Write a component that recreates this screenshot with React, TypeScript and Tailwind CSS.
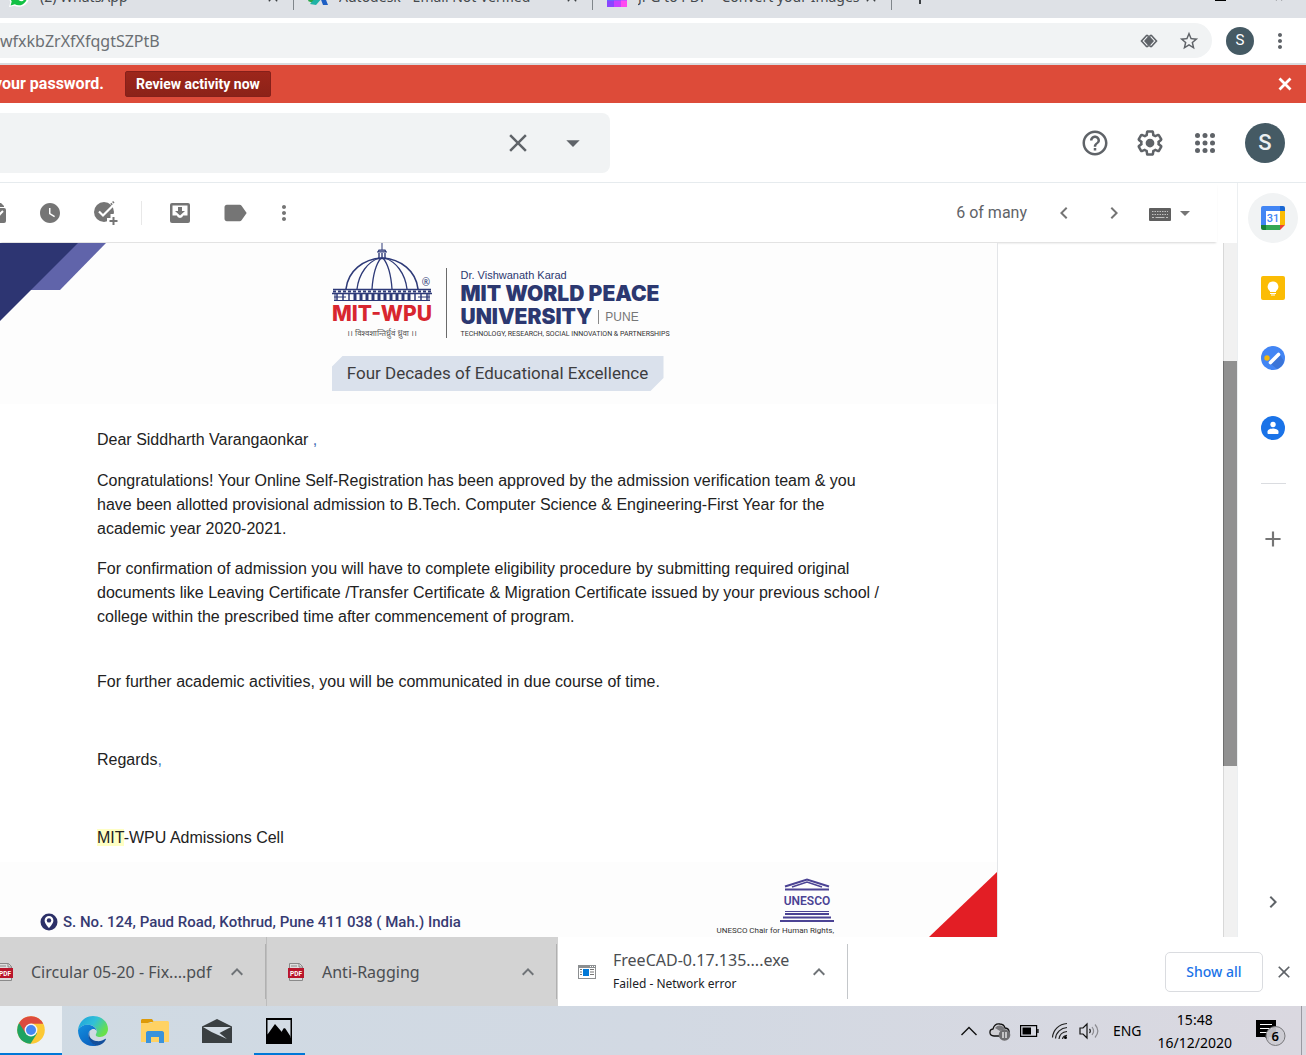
import type { ReactNode } from "react";
import {
  MdWatchLater,
  MdLabel,
  MdMoreVert,
  MdArrowDropDown,
  MdChevronLeft,
  MdChevronRight,
  MdClose,
  MdHelpOutline,
  MdStarBorder,
  MdAdd,
  MdKeyboardArrowUp,
} from "react-icons/md";

/* ---------- icons ---------- */

function WhatsAppIcon() {
  return (
    <svg viewBox="0 0 20 20" className="h-5 w-5 shrink-0">
      <path d="M0 20l1.4-5A10 10 0 1 1 5.3 18.700z" fill="#fff" />
      <path d="M1.600 18.400l1.100-4A8.300 8.300 0 1 1 5.800 17.300z" fill="#12c144" />
      <path d="M7 5.500c-2 1-1.400 4 1 6.300s5.300 3.400 6.600 1.400c.4-.8-2.100-2.400-2.700-1.700-.7.800-1 .7-2.300-.4C8.400 9.900 8.300 9.600 8.900 9c.6-.6-.9-3.800-1.900-3.500z" fill="#fff" />
    </svg>
  );
}

function AutodeskIcon() {
  return (
    <svg viewBox="0 0 20 20" className="h-5 w-5 shrink-0">
      <path d="M0 14L7 0h6L7 17z" fill="#2aa84a" />
      <path d="M2 17L11 7l4 3-7 8z" fill="#1fb2a6" />
      <path d="M8 0h5l7 18h-5l-3-8z" fill="#1d5fc4" />
    </svg>
  );
}

function PixelIcon() {
  return (
    <svg viewBox="0 0 20 20" className="h-5 w-5 shrink-0">
      <path d="M0 0h7v7H0z" fill="#35c6ff" />
      <path d="M7 0h7v7H7z" fill="#6a8cff" />
      <path d="M14 0h6v7h-6z" fill="#b06cff" />
      <path d="M0 7h7v7H0z" fill="#6a63ff" />
      <path d="M7 7h7v7H7z" fill="#9a55ff" />
      <path d="M14 7h6v7h-6z" fill="#d04cff" />
      <path d="M0 14h7v6H0z" fill="#8a45ff" />
      <path d="M7 14h7v6H7z" fill="#c840ff" />
      <path d="M14 14h6v6h-6z" fill="#ff4af0" />
    </svg>
  );
}

function SettingsIcon() {
  return (
    <svg viewBox="0 0 24 24" className="h-[30px] w-[30px]" fill="currentColor">
      <path d="M13.85 22.25h-3.7c-.74 0-1.36-.54-1.45-1.27l-.27-1.89c-.27-.14-.53-.29-.79-.46l-1.8.72c-.7.26-1.47-.03-1.81-.65L2.2 15.53c-.35-.66-.2-1.44.36-1.88l1.53-1.19c-.01-.15-.02-.3-.02-.46 0-.15.01-.31.02-.46l-1.52-1.19c-.59-.45-.74-1.26-.37-1.88l1.85-3.19c.34-.62 1.11-.9 1.79-.63l1.81.73c.26-.17.52-.32.78-.46l.27-1.91c.09-.7.71-1.25 1.44-1.25h3.7c.74 0 1.36.54 1.45 1.27l.27 1.89c.27.14.53.29.79.46l1.8-.72c.71-.26 1.48.03 1.82.65l1.84 3.18c.36.66.2 1.44-.36 1.88l-1.52 1.19c.01.15.02.3.02.46s-.01.31-.02.46l1.52 1.19c.56.45.72 1.23.37 1.86l-1.86 3.22c-.34.62-1.11.9-1.8.63l-1.8-.72c-.26.17-.52.32-.78.46l-.27 1.91c-.1.68-.72 1.22-1.46 1.22zm-3.23-2h2.76l.37-2.55.53-.22c.44-.18.88-.44 1.34-.78l.45-.34 2.38.96 1.38-2.4-2.03-1.58.07-.56c.03-.26.06-.51.06-.78s-.03-.53-.06-.78l-.07-.56 2.03-1.58-1.39-2.4-2.39.96-.45-.35c-.42-.32-.87-.58-1.33-.77l-.52-.22-.37-2.55h-2.76l-.37 2.55-.53.21c-.44.19-.88.44-1.34.79l-.45.33-2.38-.95-1.39 2.39 2.03 1.58-.07.56a7 7 0 0 0-.06.79c0 .26.02.53.06.78l.07.56-2.03 1.58 1.38 2.4 2.39-.96.45.35c.43.33.86.58 1.33.77l.53.22.38 2.55z" />
      <circle cx="12" cy="12" r="3.5" />
    </svg>
  );
}

function AppsIcon() {
  return (
    <svg viewBox="0 0 24 24" className="h-[30px] w-[30px]" fill="currentColor">
      {[6, 12, 18].map((y) =>
        [6, 12, 18].map((x) => <circle key={`${x}-${y}`} cx={x} cy={y} r="2" />),
      )}
    </svg>
  );
}

function DiamondIcon() {
  return (
    <svg viewBox="0 0 18 16" className="h-4 w-[18px]">
      <path d="M9 2.500L14 8 9 13.500 4 8z" fill="#5f6368" />
      <path d="M7 2L1.500 8 7 14M11 2l5.500 6L11 14" fill="none" stroke="#5f6368" strokeWidth="1.600" />
      <path d="M7 2l1.500 1.500M11 2L9.500 3.500M7 14l1.500-1.500M11 14l-1.500-1.500" stroke="#5f6368" strokeWidth="1.600" />
    </svg>
  );
}

function UnreadIcon() {
  return (
    <svg viewBox="0 0 24 24" className="h-6 w-6 shrink-0" fill="#757575">
      <path d="M2 7h20a2 2 0 0 1 2 2v11a2 2 0 0 1-2 2H2z" />
      <path d="M12 2h7l3 3v1H12z" />
      <path d="M12 19l9-9" stroke="#fff" strokeWidth="2" />
    </svg>
  );
}

function AddTaskIcon() {
  return (
    <svg viewBox="0 0 26 26" className="h-[26px] w-[26px]">
      <circle cx="12" cy="12" r="10" fill="#757575" />
      <path d="M7 11.500l4 4L22 4.500" fill="none" stroke="#fff" strokeWidth="2.200" />
      <path d="M19 4.500l3-3" stroke="#757575" strokeWidth="2" strokeDasharray="1.500 1" />
      <path d="M21 14v12M15 20.500h11" stroke="#fff" strokeWidth="5" />
      <path d="M21.500 17v8M17.500 21h8" stroke="#757575" strokeWidth="2" />
    </svg>
  );
}

function MoveToInboxIcon() {
  return (
    <svg viewBox="0 0 22 22" className="h-[22px] w-[22px]">
      <rect x="1" y="1" width="20" height="20" rx="2" fill="#757575" />
      <path d="M3.500 3.500h15v10h-4.300a3.300 3.300 0 0 1-6.400 0H3.500z" fill="#fff" />
      <path d="M9 5h4v4h3l-5 4.500L6 9h3z" fill="#757575" />
    </svg>
  );
}

function InputToolsIcon() {
  return (
    <svg viewBox="0 0 22 13" className="mt-1 h-[13px] w-[22px]">
      <rect width="22" height="13" rx="1" fill="#5f5f5f" />
      <path d="M3 3.500h16M3 6.500h16" stroke="#fff" strokeWidth="1.200" strokeDasharray="1.500 1" opacity=".6" />
      <path d="M3 9.500h2M6.500 9.500h9M17 9.500h2" stroke="#fff" strokeWidth="1" opacity=".6" />
    </svg>
  );
}

function CalendarIcon() {
  return (
    <svg viewBox="0 0 24 24" className="h-6 w-6">
      <path d="M2 0h18v5H5v15H0V2a2 2 0 0 1 2-2z" fill="#4285f4" />
      <path d="M19 0h3a2 2 0 0 1 2 2v3h-5z" fill="#1967d2" />
      <path d="M19 5h5v14h-5z" fill="#fbbc04" />
      <path d="M5 19h14v5H5z" fill="#34a853" />
      <path d="M0 19h5v5H2a2 2 0 0 1-2-2z" fill="#188038" />
      <path d="M19 24v-5h5z" fill="#ea4335" />
      <path d="M5 5h14v14H5z" fill="#fff" />
      <text x="12" y="16" textAnchor="middle" fontSize="11" fontWeight="500" fontFamily="Roboto, sans-serif" fill="#4285f4">
        31
      </text>
    </svg>
  );
}

function KeepIcon() {
  return (
    <svg viewBox="0 0 24 24" className="h-6 w-6">
      <rect width="24" height="24" rx="2" fill="#fbbc04" />
      <path d="M12 5.500a5.300 5.300 0 0 0-3 9.700V16h6v-.8a5.300 5.300 0 0 0-3-9.700zM9 17h6v1H9zM10 18.500h4v1h-4z" fill="#fff" />
    </svg>
  );
}

function TasksIcon() {
  return (
    <svg viewBox="0 0 24 24" className="h-6 w-6">
      <circle cx="12" cy="12" r="12" fill="#4285f4" />
      <path d="M10 18l9-9 4 6a12 12 0 0 1-7 8z" fill="#3a74d8" />
      <circle cx="6" cy="12" r="2.700" fill="#f4b70c" />
      <path d="M9.500 16.500l8-8" stroke="#fff" strokeWidth="3.600" strokeLinecap="round" />
    </svg>
  );
}

function ContactsIcon() {
  return (
    <svg viewBox="0 0 24 24" className="h-6 w-6">
      <circle cx="12" cy="12" r="12" fill="#1a73e8" />
      <circle cx="12" cy="8.500" r="2.700" fill="#fff" />
      <path d="M6.500 17v-1.500c0-2 3.500-3 5.500-3s5.500 1 5.500 3V17c0 .6-.5 1-1 1h-9c-.6 0-1-.4-1-1z" fill="#fff" />
    </svg>
  );
}

function PdfIcon({ className = "" }: { className?: string }) {
  return (
    <svg viewBox="0 0 16 18" className={`h-[18px] w-4 shrink-0 ${className}`}>
      <path d="M1.500.5h10l3 3v14h-13z" fill="#ddd" stroke="#8a8a8a" />
      <path d="M11 .5V4h3.500M3 3h6" fill="none" stroke="#8a8a8a" />
      <path d="M0 5h16v10H0z" fill="#b9152b" />
      <text x="8" y="12.500" textAnchor="middle" fontSize="6.500" fontWeight="700" fontFamily="Roboto, sans-serif" fill="#fff">
        PDF
      </text>
    </svg>
  );
}

function ExeIcon() {
  return (
    <svg viewBox="0 0 18 14" className="h-[14px] w-[18px] shrink-0">
      <rect x=".5" y=".5" width="17" height="13" fill="#fff" stroke="#8c8f91" />
      <path d="M0 0h18v3H0z" fill="#8c8f91" />
      <path d="M12 1.500h1M14 1.500h1M16 1.500h1" stroke="#fff" />
      <path d="M5 4h6v7H5z" fill="#0078d7" />
      <path d="M2 4.500h2M2 7h2M2 9.500h2M12 4.500h4M12 7h4M12 9.500h4" stroke="#777" />
    </svg>
  );
}

function DomeLogo() {
  const columns = Array.from({ length: 16 }, (_, i) => 5 + i * 6);
  return (
    <svg viewBox="0 0 100 58" className="h-[58px] w-[100px]" fill="none" stroke="#2e3a78">
      <path d="M50 0v8" strokeWidth="1" />
      <path d="M47 7h6l1 2h-8zM45 9h10" strokeWidth="1.200" fill="#8a90b5" />
      <path d="M47 10v5M50 10v5M53 10v5M45.500 15.500h9" strokeWidth="1.400" />
      <path d="M14 46C16 28 31 16 50 15c19 1 34 13 36 31" strokeWidth="1.600" />
      <path d="M25 46C27 30 36 19 47 15M40 46c1-14 4-25 9-31M60 46c-1-14-4-25-9-31M75 46C73 30 64 19 53 15" strokeWidth="1.300" />
      <path d="M1 46.500h98M0 50.500h100" strokeWidth="1.500" />
      <path d="M1 48.500h98" strokeWidth="2" strokeDasharray="3 2" />
      <path d="M2 57.500h96" strokeWidth="1" />
      {columns.map((x) => (
        <path key={x} d={`M${x} 51v6`} strokeWidth={x > 20 && x < 80 ? 3 : 1.5} />
      ))}
      <path d="M3 51v6M97 51v6M2 54h12M86 54h12" strokeWidth="1" />
    </svg>
  );
}

function UnescoLogo() {
  return (
    <svg viewBox="0 0 54 44" className="h-11 w-[54px] shrink-0" fill="none" stroke="#4b4394">
      <path d="M5 8.500L27 1.500l22 7" strokeWidth="2" />
      <path d="M12 9l15-5 15 5" strokeWidth="1.500" />
      <path d="M5 11.500h44M5 36h44M3 39.500h48M0 43h54" strokeWidth="1.800" />
      <path d="M5 33.500h44" strokeWidth="1" />
      <text x="27" y="27" textAnchor="middle" fontSize="12" fontWeight="600" fontFamily="Roboto, sans-serif" fill="#4b4394" stroke="none">
        UNESCO
      </text>
    </svg>
  );
}

function PinIcon() {
  return (
    <svg viewBox="0 0 18 18" className="h-[18px] w-[18px] shrink-0">
      <circle cx="9" cy="9" r="8.500" fill="#2c3068" />
      <path d="M9 3a4.400 4.400 0 0 0-4.400 4.400C4.600 10.500 9 15 9 15s4.400-4.500 4.400-7.600A4.400 4.400 0 0 0 9 3z" fill="#fff" />
      <circle cx="9" cy="7.400" r="2.200" fill="#2c3068" />
    </svg>
  );
}

function ChromeIcon() {
  return (
    <svg viewBox="0 0 28 28" className="h-7 w-7">
      <circle cx="14" cy="14" r="13.800" fill="#fcc934" />
      <path d="M14 14L2 7.100A13.800 13.800 0 0 0 13.500 27.800L20 17.500z" fill="#1ea362" />
      <path d="M2 7.100l6.500 10 5.500-9.400h12.200A13.800 13.800 0 0 0 2 7.100z" fill="#dd4b3e" />
      <circle cx="14" cy="14" r="6.400" fill="#f4f6f8" />
      <circle cx="14" cy="14" r="5" fill="#4688f1" />
    </svg>
  );
}

function EdgeIcon() {
  return (
    <svg viewBox="0 0 30 30" className="h-[30px] w-[30px]">
      <defs>
        <linearGradient id="edge-top" x1="0" y1="0" x2="1" y2="0.500">
          <stop offset="0" stopColor="#1c9fdc" />
          <stop offset="0.550" stopColor="#31c0d8" />
          <stop offset="1" stopColor="#68e04a" />
        </linearGradient>
        <linearGradient id="edge-left" x1="0" y1="0" x2="0.600" y2="1">
          <stop offset="0" stopColor="#1490df" />
          <stop offset="1" stopColor="#0a62c0" />
        </linearGradient>
      </defs>
      <path d="M0 14C1 6 7 0 15 0c9 0 15 6 15 13 0 5-4 8-8 8-3 0-5-1-4-3 2-3 0-8-6-9C7 8 2 10 0 14z" fill="url(#edge-top)" />
      <path d="M0 14c2-4 7-6 12-5 4 1 6.500 3.500 6.500 6-1-2-3-2.500-5-1.500C8 16 10 26 19 29.500c-1 .4-2.500.5-4 .5C6 30 0 23 0 14z" fill="url(#edge-left)" />
      <path d="M12 15c-2 4 0 9 6 10 4 .6 7-.5 9-2 .6-.4 1.200.2.800.8C26 27 23 29 19 29.700 12 28 8 20 12 15z" fill="#134f9c" />
    </svg>
  );
}

function FolderIcon() {
  return (
    <svg viewBox="0 0 28 24" className="h-6 w-7">
      <path d="M0 1.500C0 .7.700 0 1.500 0H11l2 3h-3L0 6z" fill="#dd9a08" />
      <path d="M0 4h10l3-2h13.500c.8 0 1.500.7 1.500 1.500V23H0z" fill="#ffd264" />
      <path d="M5 24V14c0-1 .7-2 2-2h14c1.300 0 2 1 2 2v10h-5v-6h-8v6z" fill="#3a93dc" />
    </svg>
  );
}

function MailIcon() {
  return (
    <svg viewBox="0 0 30 24" className="h-6 w-[30px]">
      <path d="M0 7.500L15 0l15 7.500V24H0z" fill="#3a3f41" />
      <path d="M1 8h28L17.500 14l7.500 6L9.500 13z" fill="#d3dce4" />
    </svg>
  );
}

function PhotosIcon() {
  return (
    <svg viewBox="0 0 26 26" className="h-[26px] w-[26px]">
      <path d="M0 0h26v26H0z" />
      <path d="M1.500 2h23v18L19.500 12.500l-2 .3-1 2L9 6 1.500 16.500z" fill="#d3dce4" />
      <path d="M15.500 14l2-3.500c1-.6 2 0 2.500 1l4.500 7V24L20 18.500z" />
    </svg>
  );
}

function CloudIcon() {
  return (
    <svg viewBox="0 0 22 20" className="h-5 w-[22px]">
      <path d="M5 15C-.5 14.500 0 8.500 4 8c1-4 4-5.500 7-5 3 .3 4.500 2 5 4 4 0 5 4 3.500 6.500L12 15z" fill="#cfcfd4" stroke="#111" strokeWidth="1.300" />
      <path d="M6 7c3-4 8-3 10 1l-5 2z" fill="#77777b" />
      <circle cx="15.500" cy="14" r="5.800" fill="#6e6e70" />
      <path d="M14 11v6M17 11v6" stroke="#fff" strokeWidth="1.200" />
    </svg>
  );
}

function BatteryIcon() {
  return (
    <svg viewBox="0 0 19 12" className="h-3 w-[19px]">
      <path d="M.6.600h16v10.800H.600zM18 4v4" fill="none" stroke="#000" strokeWidth="1.200" />
      <path d="M2.500 2.500h8.500v7H2.500z" />
    </svg>
  );
}

function WifiIcon() {
  return (
    <svg viewBox="0 0 18 18" className="h-[18px] w-[18px]" fill="none" stroke="#222" strokeWidth="1.200">
      <path d="M1.500 15.500C2 8 8 2 16 1.500M4.500 16.500C5 10.500 10 6 16 5.500M8 17c.5-4.500 3.500-7 8-7.500M11.500 17c.3-2 2-3.500 4.500-3.700" />
      <circle cx="14.500" cy="15.500" r="1.500" fill="#000" stroke="none" />
    </svg>
  );
}

function SpeakerIcon() {
  return (
    <svg viewBox="0 0 20 18" className="h-[18px] w-5" fill="none" strokeWidth="1.200">
      <path d="M1 6h3l4-4v14l-4-4H1z" stroke="#111" />
      <path d="M10.500 7c1 1 1 3 0 4" stroke="#111" />
      <path d="M13 5c2 2.500 2 5.500 0 8" stroke="#8b8b90" />
      <path d="M16 2.500c3.500 4 3.500 9 0 13" stroke="#8b8b90" />
    </svg>
  );
}

/* ---------- building blocks ---------- */

function IconButton({ label, className, children }: { label: string; className: string; children: ReactNode }) {
  return (
    <button type="button" aria-label={label} className={`flex shrink-0 items-center justify-center ${className}`}>
      {children}
    </button>
  );
}

function BrowserTab({ icon, title, className }: { icon: ReactNode; title: string; className: string }) {
  return (
    <div className={`flex items-center ${className}`}>
      {icon}
      <span className="ml-[11px] flex-1 overflow-hidden text-sm whitespace-nowrap text-[#45494d]">{title}</span>
      <IconButton label={`Close ${title}`} className="mr-[10px] w-5">
        <MdClose className="h-4 w-4 text-[#3c4043]" />
      </IconButton>
      <span className="h-[26px] w-px bg-[#80868b]" />
    </div>
  );
}

function TaskbarApp({ label, className = "", children }: { label: string; className?: string; children: ReactNode }) {
  return (
    <button type="button" aria-label={label} className={`relative flex w-[62px] items-center justify-center ${className}`}>
      {children}
    </button>
  );
}

/* ---------- page sections ---------- */

function BrowserChrome() {
  return (
    <header className="shrink-0">
      <div className="flex h-[18px] flex-col justify-end overflow-hidden bg-[#dee1e6]">
        <div className="flex h-[42px] shrink-0 items-center">
          <BrowserTab className="w-[294px] pl-[9px]" icon={<WhatsAppIcon />} title="(2) WhatsApp" />
          <BrowserTab className="w-[299px] pl-[14px]" icon={<AutodeskIcon />} title="Autodesk - Email Not Verified" />
          <BrowserTab className="w-[299px] pl-[14px]" icon={<PixelIcon />} title="JPG to PDF – Convert your Images" />
          <IconButton label="New tab" className="ml-4 w-6">
            <MdAdd className="h-6 w-6 text-[#3c4043]" />
          </IconButton>
          <div className="ml-auto flex items-center gap-[47px] pr-[21px]">
            <span className="mt-[7px] h-px w-[11px] bg-black" />
            <MdClose className="h-3 w-3" />
          </div>
        </div>
      </div>
      <div className="flex h-[45px] items-center bg-white pr-[14px]">
        <div className="flex h-[35px] flex-1 items-center rounded-r-full bg-[#f1f3f4] pr-[11px]">
          <input
            aria-label="Address"
            defaultValue="wfxkbZrXfXfqgtSZPtB"
            className="flex-1 bg-transparent text-base text-[#6b6f73] outline-none"
          />
          <IconButton label="Page info" className="w-10">
            <DiamondIcon />
          </IconButton>
          <IconButton label="Bookmark" className="ml-2 w-6">
            <MdStarBorder className="h-[22px] w-[22px] text-[#5f6368]" />
          </IconButton>
        </div>
        <IconButton label="Profile" className="ml-[14px] h-7 w-7 rounded-full bg-[#455a64] font-[Roboto,sans-serif] text-[15px] text-white">
          S
        </IconButton>
        <IconButton label="Menu" className="ml-[14px] w-6">
          <MdMoreVert className="h-6 w-6 text-[#5f6368]" />
        </IconButton>
      </div>
      <div className="h-[2px] bg-[#d9dbde]" />
    </header>
  );
}

function SecurityBanner() {
  return (
    <div className="flex h-[38px] shrink-0 items-center bg-[#dd4b39] pr-[14px] font-[Roboto,sans-serif] font-bold text-white">
      <p className="flex w-[104px] justify-end overflow-hidden text-base whitespace-nowrap">your password.</p>
      <button
        type="button"
        className="ml-[21px] h-[26px] rounded-xs border border-[#86201a] bg-linear-to-b from-[#9d261b] to-[#8c2218] px-[10px] text-sm whitespace-nowrap"
      >
        Review activity now
      </button>
      <IconButton label="Dismiss" className="ml-auto">
        <svg viewBox="0 0 14 14" className="h-[14px] w-[14px]">
          <path d="M1.500 1.500l11 11M12.500 1.500l-11 11" stroke="#fff" strokeWidth="2.800" />
        </svg>
      </IconButton>
    </div>
  );
}

function MailHeader() {
  return (
    <div className="flex h-20 shrink-0 items-center border-b border-[#e6ebee] bg-white pr-[21px] text-[#5f6368]">
      <form role="search" className="flex h-[60px] max-w-[610px] flex-1 items-center rounded-r-lg bg-[#f1f3f4] pr-[17px]">
        <input aria-label="Search mail" className="min-w-0 flex-1 bg-transparent outline-none" />
        <IconButton label="Clear search" className="w-10">
          <MdClose className="h-[30px] w-[30px]" />
        </IconButton>
        <IconButton label="Search options" className="ml-[15px] w-10">
          <MdArrowDropDown className="h-8 w-8" />
        </IconButton>
      </form>
      <div className="ml-auto flex items-center">
        <IconButton label="Support" className="w-[55px]">
          <MdHelpOutline className="h-[30px] w-[30px]" />
        </IconButton>
        <IconButton label="Settings" className="w-[55px]">
          <SettingsIcon />
        </IconButton>
        <IconButton label="Google apps" className="w-[55px]">
          <AppsIcon />
        </IconButton>
        <IconButton label="Account" className="ml-[13px] h-10 w-10 rounded-full bg-[#455a64] font-[Roboto,sans-serif] text-[22px] font-medium text-[#eceff1]">
          S
        </IconButton>
      </div>
    </div>
  );
}

function MessageToolbar() {
  return (
    <div className="mr-5 flex h-[59px] shrink-0 items-center text-[#757575] shadow-[0_2px_2px_-1px_rgba(0,0,0,0.16)]">
      <IconButton label="Mark as unread" className="w-[22px] justify-end overflow-hidden pr-4">
        <UnreadIcon />
      </IconButton>
      <IconButton label="Snooze" className="w-[55px]">
        <MdWatchLater className="h-6 w-6" />
      </IconButton>
      <IconButton label="Add to tasks" className="w-[55px]">
        <AddTaskIcon />
      </IconButton>
      <span className="mr-[10px] ml-[9px] h-6 w-px bg-[#e8e8e8]" />
      <IconButton label="Move to inbox" className="w-[55px]">
        <MoveToInboxIcon />
      </IconButton>
      <IconButton label="Labels" className="w-[55px]">
        <MdLabel className="h-7 w-7" />
      </IconButton>
      <IconButton label="More" className="w-11">
        <MdMoreVert className="h-6 w-6" />
      </IconButton>
      <span className="mr-[25px] ml-auto font-[Roboto,sans-serif] text-base text-[#5f6368]">6 of many</span>
      <IconButton label="Newer" className="w-6">
        <MdChevronLeft className="h-6 w-6" />
      </IconButton>
      <IconButton label="Older" className="ml-[26px] w-6">
        <MdChevronRight className="h-6 w-6" />
      </IconButton>
      <IconButton label="Input tools" className="mr-5 ml-[23px] gap-[2px]">
        <InputToolsIcon />
        <MdArrowDropDown className="h-6 w-6" />
      </IconButton>
    </div>
  );
}

function Letterhead() {
  return (
    <div className="relative h-[161px] bg-[#fdfdfd]">
      <svg viewBox="0 0 106 78" className="absolute top-0 left-0 h-[78px] w-[106px]">
        <path d="M76 0h30L60 47H30z" fill="#6064aa" />
        <path d="M0 0h78L0 78z" fill="#2d3572" />
      </svg>
      <div className="mx-auto w-[334px]">
        <div className="flex">
          <div className="flex w-[101px] shrink-0 flex-col items-center">
            <div className="relative">
              <DomeLogo />
              <span className="absolute right-[2px] bottom-[14px] text-[10px] leading-none text-[#2e3a78]">®</span>
            </div>
            <span className="font-[Inter,sans-serif] text-[21px] leading-[26px] font-extrabold whitespace-nowrap text-[#d8262f]">MIT-WPU</span>
            <span className="text-[8px] leading-3 whitespace-nowrap text-[#555]">।। विश्वशान्तिर्ध्रुवं ध्रुवा ।।</span>
          </div>
          <span className="mt-[25px] ml-[13px] h-[70px] w-px shrink-0 bg-[#6b6b6b]" />
          <div className="ml-[14px] pt-[25px] whitespace-nowrap text-[#2c3870]">
            <p className="font-['Liberation_Sans',sans-serif] text-[11px] leading-[14px]">Dr. Vishwanath Karad</p>
            <p className="font-[Inter,sans-serif] text-[21px] leading-[23px] font-black">MIT WORLD PEACE</p>
            <p className="flex items-center font-[Inter,sans-serif] text-[21px] leading-[23px] font-black">
              UNIVERSITY
              <span className="mx-[6px] h-[14px] w-px bg-[#888]" />
              <span className="font-['Liberation_Sans',sans-serif] text-xs font-normal text-[#777]">PUNE</span>
            </p>
            <p className="font-[Roboto,sans-serif] text-[7px] leading-3 text-[#333]">TECHNOLOGY, RESEARCH, SOCIAL INNOVATION &amp; PARTNERSHIPS</p>
          </div>
        </div>
        <div className="mt-4 mr-[2px] flex h-[35px] items-center justify-center bg-[#dae1ec] font-[Roboto,sans-serif] text-[17px] whitespace-nowrap text-[#3d3d40] [clip-path:polygon(11px_0,100%_0,100%_22px,calc(100%-13px)_100%,0_100%,0_11px)]">
          Four Decades of Educational Excellence
        </div>
      </div>
    </div>
  );
}

function LetterFooter() {
  return (
    <div className="mt-auto flex h-[75px] shrink-0 bg-[#fdfdfd]">
      <p className="mt-[51px] ml-10 flex h-[18px] items-center gap-[5px] font-[Roboto,sans-serif] text-[15px] font-medium whitespace-nowrap text-[#363a72]">
        <PinIcon />
        S. No. 124, Paud Road, Kothrud, Pune 411 038 ( Mah.) India
      </p>
      <div className="mt-4 ml-auto flex flex-col items-end">
        <UnescoLogo />
        <span className="font-[Roboto,sans-serif] text-[8px] leading-[18px] whitespace-nowrap text-[#333]">UNESCO Chair for Human Rights,</span>
      </div>
      <svg viewBox="0 0 68 65" className="mt-[10px] ml-[95px] h-[65px] w-[68px]">
        <path d="M68 0v65H0z" fill="#e31e25" />
      </svg>
    </div>
  );
}

function Letter() {
  return (
    <article className="flex flex-1 flex-col border-r border-[#e3e5e8]">
      <Letterhead />
      <div className="flex max-w-[892px] flex-col pt-6 pl-[97px] font-['Liberation_Sans',sans-serif] text-base leading-6 text-[#222]">
        <p>
          Dear Siddharth Varangaonkar <span className="text-[#3f6fb5]">,</span>
        </p>
        <p className="mt-[17px]">
          Congratulations! Your Online Self-Registration has been approved by the admission verification team &amp; you
          <br />
          have been allotted provisional admission to B.Tech. Computer Science &amp; Engineering-First Year for the
          <br />
          academic year 2020-2021.
        </p>
        <p className="mt-4">
          For confirmation of admission you will have to complete eligibility procedure by submitting required original
          documents like Leaving Certificate /Transfer Certificate &amp; Migration Certificate issued by your previous
          school / college within the prescribed time after commencement of program.
        </p>
        <p className="mt-[41px]">For further academic activities, you will be communicated in due course of time.</p>
        <p className="mt-[54px]">
          Regards<span className="text-[#3f6fb5]">,</span>
        </p>
        <p className="mt-[54px]">
          <mark className="bg-[#ffffc4] text-inherit">MIT</mark>-WPU Admissions Cell
        </p>
      </div>
      <LetterFooter />
    </article>
  );
}

function SidePanel() {
  return (
    <aside className="flex w-[69px] shrink-0 flex-col items-center border-l border-[#eceff1] bg-white pl-[2px]">
      <div className="flex h-[70px] items-center">
        <IconButton label="Calendar" className="h-[50px] w-[50px] rounded-full bg-[#f1f3f4]">
          <CalendarIcon />
        </IconButton>
      </div>
      <IconButton label="Keep" className="h-[70px] w-[50px]">
        <KeepIcon />
      </IconButton>
      <IconButton label="Tasks" className="h-[70px] w-[50px]">
        <TasksIcon />
      </IconButton>
      <IconButton label="Contacts" className="h-[70px] w-[50px]">
        <ContactsIcon />
      </IconButton>
      <hr className="mt-5 w-[25px] border-[#dadce0]" />
      <IconButton label="Get add-ons" className="mt-5 h-[70px] w-[50px]">
        <MdAdd className="h-[26px] w-[26px] text-[#757575]" />
      </IconButton>
      <IconButton label="Hide side panel" className="mt-auto h-[70px] w-[50px]">
        <MdChevronRight className="h-6 w-6 text-[#5f6368]" />
      </IconButton>
    </aside>
  );
}

function DownloadsBar() {
  return (
    <footer className="flex h-[69px] shrink-0 items-center bg-white pr-3">
      <div className="flex h-full w-[267px] items-center overflow-hidden border-r border-[#bdbdbd] bg-[#d3d3d3]">
        <PdfIcon className="-ml-[3px]" />
        <span className="ml-[18px] flex-1 text-base whitespace-nowrap text-[#4b4e52]">Circular 05-20 - Fix....pdf</span>
        <IconButton label="Options for Circular 05-20" className="w-6">
          <MdKeyboardArrowUp className="h-6 w-6 text-[#6f7377]" />
        </IconButton>
        <span className="ml-4 h-[55px] w-px bg-[#b0b0b0]" />
      </div>
      <div className="flex h-full w-[291px] items-center bg-[#d3d3d3] pl-[21px]">
        <PdfIcon />
        <span className="ml-[18px] flex-1 text-base whitespace-nowrap text-[#4b4e52]">Anti-Ragging</span>
        <IconButton label="Options for Anti-Ragging" className="w-6">
          <MdKeyboardArrowUp className="h-6 w-6 text-[#6f7377]" />
        </IconButton>
        <span className="mr-px ml-4 h-[55px] w-px bg-[#b0b0b0]" />
      </div>
      <div className="flex h-full w-[290px] items-center pl-5">
        <ExeIcon />
        <div className="ml-[17px] flex-1 whitespace-nowrap">
          <p className="text-base leading-6 text-[#4b4e52]">FreeCAD-0.17.135....exe</p>
          <p className="text-xs leading-6 text-[#202124]">Failed - Network error</p>
        </div>
        <IconButton label="Options for FreeCAD" className="w-6">
          <MdKeyboardArrowUp className="h-6 w-6 text-[#6f7377]" />
        </IconButton>
        <span className="ml-4 h-[55px] w-px bg-[#c4c7ca]" />
      </div>
      <button type="button" className="ml-auto h-10 w-[98px] rounded-[5px] border border-[#dadce0] text-sm font-medium text-[#1a73e8]">
        Show all
      </button>
      <IconButton label="Close downloads bar" className="ml-[11px] w-5">
        <MdClose className="h-5 w-5 text-[#5f6368]" />
      </IconButton>
    </footer>
  );
}

function Taskbar() {
  return (
    <nav className="flex h-[49px] shrink-0 bg-linear-to-r from-[#cfdae3] via-[#d2d9e3] to-[#dad8e0]">
      <TaskbarApp label="Chrome" className="border-b-2 border-[#0078d7] bg-[#ecf1f5]">
        <ChromeIcon />
      </TaskbarApp>
      <TaskbarApp label="Edge">
        <EdgeIcon />
      </TaskbarApp>
      <TaskbarApp label="File Explorer">
        <FolderIcon />
      </TaskbarApp>
      <TaskbarApp label="Mail">
        <MailIcon />
      </TaskbarApp>
      <TaskbarApp label="Photos">
        <PhotosIcon />
        <span className="absolute bottom-0 left-[6px] h-[2px] w-[51px] bg-[#0078d7]" />
      </TaskbarApp>
      <div className="ml-auto flex items-center pr-1 text-sm text-black">
        <svg viewBox="0 0 16 10" className="h-[10px] w-4">
          <path d="M.5 9L8 1.500 15.500 9" fill="none" stroke="#111" strokeWidth="1.400" />
        </svg>
        <span className="ml-3">
          <CloudIcon />
        </span>
        <span className="ml-[9px]">
          <BatteryIcon />
        </span>
        <span className="ml-3">
          <WifiIcon />
        </span>
        <span className="ml-[10px]">
          <SpeakerIcon />
        </span>
        <span className="ml-[14px]">ENG</span>
        <div className="ml-4 text-center leading-[23px]">
          <p>15:48</p>
          <p>16/12/2020</p>
        </div>
        <div className="relative ml-6 h-[30px] w-[30px]">
          <svg viewBox="0 0 30 30" className="h-[30px] w-[30px]">
            <path d="M0 4h20v17H13v4l-4-4H0z" />
            <path d="M4 8.500h12M4 12.500h12M4 16.500h8" stroke="#fff" strokeWidth="1.200" />
            <circle cx="19.500" cy="20" r="9.500" fill="#cccbd1" fillOpacity=".92" stroke="#77777a" />
          </svg>
          <span className="absolute right-[7px] bottom-[2px] text-[13px] leading-4 font-semibold">6</span>
        </div>
        <span className="ml-[15px] h-[49px] w-px bg-[#9a9aa2]" />
      </div>
    </nav>
  );
}

export default function App() {
  return (
    <div className="flex h-screen flex-col overflow-hidden bg-white font-['Noto_Sans',sans-serif]">
      <BrowserChrome />
      <SecurityBanner />
      <MailHeader />
      <main className="flex min-h-0 flex-1">
        <div className="flex min-w-0 flex-1 flex-col">
          <MessageToolbar />
          <div className="mt-px flex min-h-0 flex-1 overflow-hidden">
            <Letter />
            <div className="w-[225px] shrink-0" />
            <div className="flex w-[14px] shrink-0 flex-col border-l border-[#d8d8d8] bg-[#f1f1f1] pt-[118px]">
              <div className="-ml-px h-[405px] border-l border-[#6f6f6f] bg-[#919191]" />
            </div>
          </div>
        </div>
        <SidePanel />
      </main>
      <DownloadsBar />
      <Taskbar />
    </div>
  );
}
